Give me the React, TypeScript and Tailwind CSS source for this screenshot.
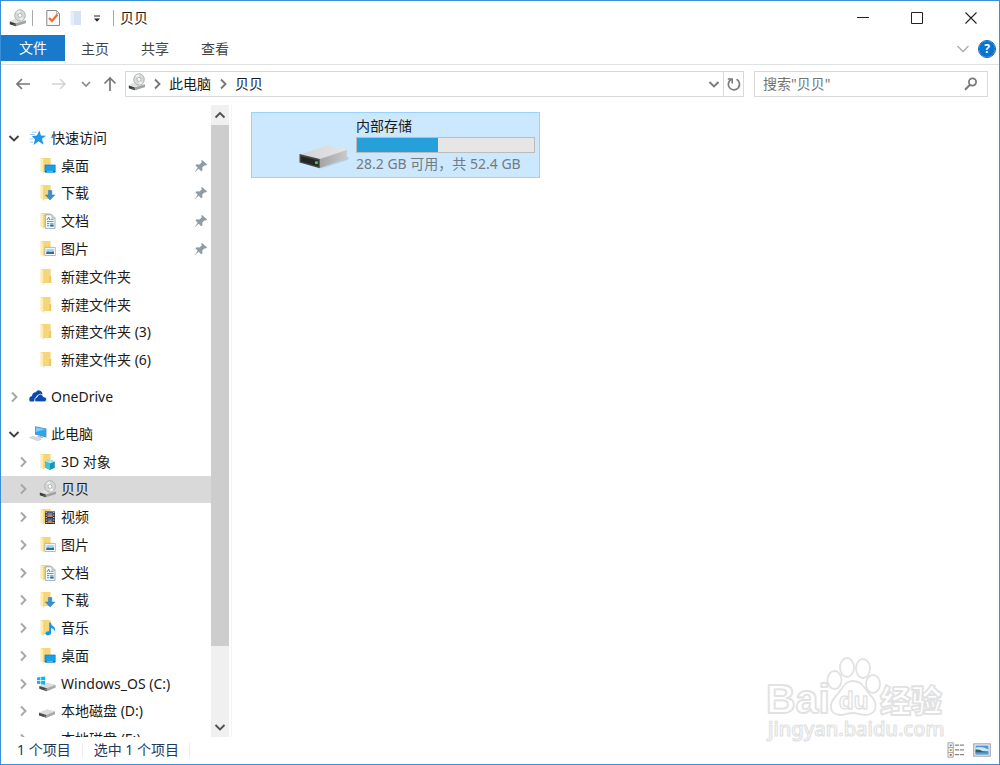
import React, { useState } from "react";

type IconProps = { className?: string };

const Chevron = ({ dir, className = "" }: { dir: "right" | "down" | "up"; className?: string }) => {
  const d = {
    right: "M4 1.5 8.5 6 4 10.5",
    down: "M1.5 4 6 8.5 10.5 4",
    up: "M1.5 8.5 6 4 10.5 8.5",
  }[dir];
  return (
    <svg viewBox="0 0 12 12" className={`size-3 ${className}`} fill="none" stroke="currentColor" strokeWidth="1.9" aria-hidden="true">
      <path d={d} />
    </svg>
  );
};

const DiscDrive = ({ className = "" }: IconProps) => (
  <svg viewBox="0 0 18 18" className={`size-[18px] ${className}`} aria-hidden="true">
    <path d="M1 12.6 6 9.8 17 11.6V14L6.5 17.2 1 15.4z" fill="#c9c9c9" />
    <path d="M1 12.6 6 9.8 17 11.6 6.8 14.6z" fill="#e2e2e2" />
    <path d="M.8 12.4 6.8 14.4V17.2L.8 15.2z" fill="#3a3d3a" />
    <path d="M6.8 14.5 17 11.6V14L6.8 17.2z" fill="#a2a2a2" />
    <ellipse cx="11" cy="6.4" rx="5.3" ry="5.7" fill="#d6d9d9" stroke="#aaafaf" strokeWidth=".9" />
    <path d="M11 6.4 7.5 2.8A5 5 0 0 1 11 1.2zM11 6.4 14.6 10A5 5 0 0 1 11 11.6z" fill="#eef0f0" />
    <ellipse cx="11" cy="6.4" rx="1.9" ry="2" fill="#fff" stroke="#a5abab" strokeWidth=".8" />
    <circle cx="5" cy="15.3" r=".5" fill="#5fc95f" />
  </svg>
);

const DiskShape = () => (
  <>
    <path d="M1 9.8 9 6.6 17 8.6V11.2L8.3 14.6 1 12.4z" fill="#c4c4c4" />
    <path d="M1 9.8 9 6.6 17 8.6 8.3 11.9z" fill="#dedede" />
    <path d="M.8 9.6 8.3 11.9V14.8L.8 12.4z" fill="#4a4c4a" />
    <path d="M8.3 11.9 17 8.6V11.2L8.3 14.8z" fill="#aaa" />
    <circle cx="6.9" cy="13.1" r=".6" fill="#5fd35f" />
  </>
);

const Disk = () => (
  <svg viewBox="0 0 18 18" className="size-[18px]" aria-hidden="true">
    <g transform="translate(-1 1)">
      <DiskShape />
    </g>
  </svg>
);

const WindowsDisk = () => (
  <svg viewBox="0 0 18 18" className="size-[18px] overflow-visible" aria-hidden="true">
    <g transform="translate(-.5 1.4)">
      <DiskShape />
    </g>
    <path d="M-2 2.500 1.400 2.100V5.300H-2zM2.100 2 6.200 1.500V5.300H2.100zM-2 6H1.400V9.100L-2 8.700zM2.100 6H6.200V9.700L2.100 9.200z" fill="#10b4ee" />
  </svg>
);

const Folder = ({ children }: { children?: React.ReactNode }) => (
  <svg viewBox="0 0 18 18" className="size-[18px]" aria-hidden="true">
    <path d="M2.2 1H11.6V15H2.2z" fill="#f6d67b" />
    <path d="M10.2 8H12.2V15H10.2z" fill="#eec75f" />
    <path d="M1.4 1.1 4.8 2.4V16.6L1.4 14.6z" fill="#fdebb0" />
    <path d="M4.8 2.6V16.5" stroke="#efcd70" strokeWidth=".7" />
    {children}
  </svg>
);

const DesktopFolder = () => (
  <Folder>
    <path d="M6 8H16.2V15.2H6z" fill="#13a1f2" stroke="#1678b8" strokeWidth=".7" />
    <path d="M6.2 14H16V15.2H6.2z" fill="#1669a6" />
    <path d="M8 14.2H14V15H8z" fill="#65c7f8" />
  </Folder>
);
const DownloadFolder = () => (
  <Folder>
    <path d="M9.4 6.5H12.8V11H15.8L11.1 16 6.5 11H9.4z" fill="#3791d8" stroke="#2377bd" strokeWidth=".5" />
  </Folder>
);
const DocumentFolder = () => (
  <Folder>
    <path d="M6.3 2.8H13L16 5.8V16.4H6.3z" fill="#fbfdfe" stroke="#8d9aa5" strokeWidth=".8" />
    <path d="M13 2.8V5.8H16" fill="#dce3e8" stroke="#8d9aa5" strokeWidth=".7" />
    <path d="M8 8 9.7 5 10.6 8M11.5 7.3H14.6M8 9.6H14.6M8 11.6H10.3M8 13.8H10.3" stroke="#299bd8" strokeWidth="1" fill="none" />
    <path d="M11.2 11H14.6V14.3H11.2z" fill="#6bb8e6" />
    <path d="M11.2 13H14.6V14.5H11.2z" fill="#356b68" />
  </Folder>
);
const PictureFolder = () => (
  <Folder>
    <path d="M5.9 7.4H16.3V15.5H5.9z" fill="#fff" stroke="#9daab3" strokeWidth=".8" />
    <path d="M7.3 8.8H14.9V14.1H7.3z" fill="#a7d4f2" />
    <path d="M7.3 12.1Q9 10.8 11 12L14.9 11.5V14.1H7.3z" fill="#326e9a" />
  </Folder>
);
const ObjectsFolder = () => (
  <Folder>
    <path d="M6 8.600 11 6.800 15.800 8.400V14.700L11 17 6 14.600z" fill="#1795b5" />
    <path d="M6 8.600 11 6.800 15.800 8.400 11 10.400z" fill="#a3ecf4" />
    <path d="M6 8.600 11 10.400V17L6 14.600z" fill="#3fc6dc" />
  </Folder>
);
const VideoFolder = () => (
  <Folder>
    <path d="M6 3.4H16V16H6z" fill="#2e3038" />
    <path d="M8.4 4.4H13.6V9H8.4z" fill="#647ebd" />
    <path d="M8.4 10.2H13.6V15H8.4z" fill="#4d68a8" />
    <path d="M8.4 8 11 6 13.6 8V9H8.4zM8.4 14 11 12 13.6 14V15H8.4z" fill="#c98b4b" />
    <path d="M7.2 4V16M14.8 4V16" stroke="#f2f2f2" strokeWidth="1" strokeDasharray="1.2 1.3" />
  </Folder>
);
const MusicFolder = () => (
  <Folder>
    <path d="M10.2 3.5H11.8Q12 6 14.4 7.4 17 9.2 15.7 12.4 15.3 9.8 12 9V13.4Q12 16 9.2 16.3 6.3 16.3 6.4 14.2 6.8 12 10.2 12.2z" fill="#0e97ee" />
  </Folder>
);

const Star = () => (
  <svg viewBox="0 0 18 18" className="size-[18px]" aria-hidden="true">
    <path d="M10.5 1.4 11.9 6.4 17 6.7 12.9 9.8 14.6 15.7 9.6 12.2 4.5 15.9 6.1 10.3 2.8 7.3 7.9 6.6z" fill="#1f95e6" />
    <path d="M2.5 3.2H7.5M1 5.5H6M.5 10H4M1 13H4" stroke="#8dcaf3" strokeWidth=".9" />
  </svg>
);
const OneDrive = () => (
  <svg viewBox="0 0 18 18" className="size-[18px]" aria-hidden="true">
    <path d="M.4 12.4Q-.2 8.6 3 8 3.3 4.600 6.800 4.300 8.400 1.300 11.400 2.800 13.600 4.100 13.500 6.400L8 7.500 5 13.600H2Q.8 13.600.4 12.400z" fill="#0c49ad" />
    <path d="M5.600 12.200Q5.300 9.600 8 9.200 8.800 6.200 11.400 6.200 13.600 6.400 14.400 8.800 17.400 8.800 17.600 11.200 17.600 13.700 15.400 13.800H7.400Q6 13.600 5.600 12.200z" fill="#0c49ad" stroke="#fff" strokeWidth=".7" />
  </svg>
);
const Computer = () => (
  <svg viewBox="0 0 18 18" className="size-[18px]" aria-hidden="true">
    <path d="M6 1.3 17.4 3.5V12.4L6 9.6z" fill="#5c8bb0" />
    <path d="M6.7 2.3 16.6 4.2V11.3L6.7 8.9z" fill="#27a7ef" />
    <path d="M6.7 2.3 16.6 4.2 6.7 7z" fill="#7dcbf7" />
    <path d="M9.5 10.4 14 11.6V13.2L8 12z" fill="#aebac4" />
    <path d="M.6 12.6 4.2 11.4 12.4 14 9 15.8z" fill="#d5dce2" stroke="#adb8c1" strokeWidth=".5" />
  </svg>
);
const Pin = () => (
  <svg viewBox="0 0 14 14" className="size-3.5" aria-hidden="true">
    <path d="M8 1 13.2 5.6 11.8 6.6 10.8 6.2 8.2 8.6 8.5 11.2 7.1 12.2 4.7 9.7 1 13 .8 12.8 3.7 8.7 1.5 6.4 2.7 5.3 5.5 5.6 7.8 3.2 7.2 1.8z" fill="#8f9ba5" />
  </svg>
);

const LargeDrive = () => (
  <svg viewBox="0 0 50 26" className="h-[26px] w-[50px] overflow-visible" aria-hidden="true">
    <defs>
      <linearGradient id="driveTop" x1="0" x2="1">
        <stop offset="0" stopColor="#d3d4d6" />
        <stop offset="1" stopColor="#e5e5e7" />
      </linearGradient>
      <linearGradient id="driveSide" x1="0" x2="1">
        <stop offset="0" stopColor="#a3a4a5" />
        <stop offset="1" stopColor="#c9c9ca" />
      </linearGradient>
    </defs>
    <path d="M21 25 48 16 50 14 47 12z" fill="#93b1c9" opacity=".5" />
    <path d="M1 10.5 27 1.6Q29 1 31 1.5L46.5 5.2 47.8 6.2 21 15.2z" fill="url(#driveTop)" />
    <path d="M20.8 15 47.8 6V13.8L20.8 24.3z" fill="url(#driveSide)" />
    <path d="M.5 10 20.8 15.1V24.3L.5 18.4z" fill="#454747" />
    <path d="M2 12.2 19.4 16.6V22.4L2 17.4z" fill="#242626" />
    <circle cx="17.4" cy="18.7" r="1.6" fill="#37cf42" />
  </svg>
);

type Node = { label: string; icon: React.ReactNode; pinned?: boolean; leaf?: boolean };

const quick: Node[] = [
  { label: "桌面", icon: <DesktopFolder />, pinned: true, leaf: true },
  { label: "下载", icon: <DownloadFolder />, pinned: true, leaf: true },
  { label: "文档", icon: <DocumentFolder />, pinned: true, leaf: true },
  { label: "图片", icon: <PictureFolder />, pinned: true, leaf: true },
  { label: "新建文件夹", icon: <Folder />, leaf: true },
  { label: "新建文件夹", icon: <Folder />, leaf: true },
  { label: "新建文件夹 (3)", icon: <Folder />, leaf: true },
  { label: "新建文件夹 (6)", icon: <Folder />, leaf: true },
];

const computer: Node[] = [
  { label: "3D 对象", icon: <ObjectsFolder /> },
  { label: "贝贝", icon: <DiscDrive /> },
  { label: "视频", icon: <VideoFolder /> },
  { label: "图片", icon: <PictureFolder /> },
  { label: "文档", icon: <DocumentFolder /> },
  { label: "下载", icon: <DownloadFolder /> },
  { label: "音乐", icon: <MusicFolder /> },
  { label: "桌面", icon: <DesktopFolder /> },
  { label: "Windows_OS (C:)", icon: <WindowsDisk /> },
  { label: "本地磁盘 (D:)", icon: <Disk /> },
  { label: "本地磁盘 (E:)", icon: <Disk /> },
];

const RootRow = ({ label, icon, open }: { label: string; icon: React.ReactNode; open: boolean }) => (
  <div className="flex min-h-0 items-center pl-[7px]">
    <button type="button" aria-label={`展开 ${label}`} className={open ? "text-[#404040]" : "text-[#a6a6a6]"}>
      <Chevron dir={open ? "down" : "right"} />
    </button>
    <button type="button" className="ml-[9px] flex items-center gap-1 whitespace-nowrap">
      {icon}
      {label}
    </button>
  </div>
);

const ChildRow = ({ node, selected, onSelect }: { node: Node; selected: boolean; onSelect: () => void }) => (
  <li className={`flex min-h-0 items-center pr-[3px] pl-4 ${selected ? "bg-[#d9d9d9]" : ""}`}>
    {node.leaf ? (
      <span className="w-3" />
    ) : (
      <button type="button" aria-label={`展开 ${node.label}`} className="text-[#a6a6a6]">
        <Chevron dir="right" />
      </button>
    )}
    <button type="button" onClick={onSelect} className="ml-2.5 flex flex-1 items-center gap-1 whitespace-nowrap">
      {node.icon}
      {node.label}
    </button>
    {node.pinned && <Pin />}
  </li>
);

const Watermark = () => (
  <svg viewBox="0 0 184 92" className="pointer-events-none absolute right-[52px] bottom-[20px] h-[92px] w-[184px]" fill="#fff" stroke="#e2e2e2" strokeWidth="1.8" strokeLinejoin="round" aria-hidden="true">
    <g fontWeight="700" fontFamily="'Liberation Sans', sans-serif">
      <text x="2" y="60" fontSize="41">Bai</text>
      <ellipse cx="70.500" cy="27" rx="7" ry="9" />
      <ellipse cx="83" cy="14.500" rx="7" ry="9.500" />
      <ellipse cx="99" cy="15.500" rx="7" ry="9.500" />
      <ellipse cx="109" cy="31" rx="7" ry="9" />
      <path d="M89 28C98 28 101 36 106 42 114 49 114 61 102 62 96 62 94 60 89 60 83 60 81 62 76 62 64 61 65 50 72 43 78 37 80 28 89 28z" />
      <text x="75" y="56" fontSize="24" strokeWidth="1.400">du</text>
      <text x="116" y="59" fontSize="31" fontFamily="'Noto Sans CJK SC', sans-serif" fontWeight="900">经验</text>
    </g>
    <text x="4" y="83" fontSize="20" fontFamily="'Noto Sans', sans-serif" fontWeight="500" strokeWidth="1.200">jingyan.baidu.com</text>
  </svg>
);

export default function App() {
  const [selected, setSelected] = useState("贝贝");
  const [query, setQuery] = useState("");
  const used = 46;

  return (
    <div className="flex h-screen flex-col overflow-hidden border border-[#3990d9] bg-white font-['Noto_Sans','Noto_Sans_CJK_SC',sans-serif] text-sm leading-5 text-[#1a1a1a]">
      <header>
        <div className="flex h-[34px] items-center pl-2">
          <DiscDrive />
          <span className="ml-[5px] h-4 w-px bg-[#a8a8a8]" />
          <button type="button" aria-label="属性" className="ml-3">
            <svg viewBox="0 0 16 18" className="h-[18px] w-4" aria-hidden="true">
              <path d="M1.800 1.500H11.500L14.500 4.500V16.500H1.800z" fill="#fafafa" stroke="#8b8b8b" />
              <path d="M11.500 1.500V4.500H14.500" fill="none" stroke="#a5a5a5" strokeWidth=".8" />
              <path d="M4 9 7 12 12.500 5.500" fill="none" stroke="#f26a2e" strokeWidth="2.200" />
            </svg>
          </button>
          <button type="button" aria-label="新建文件夹" className="ml-2">
            <svg viewBox="0 0 14 18" className="h-[18px] w-3.5" aria-hidden="true">
              <path d="M2 2H12V16H2z" fill="#d6e2f3" />
              <path d="M1.500 2 5 3.200V17L1.500 15.500z" fill="#e6eef9" />
            </svg>
          </button>
          <button type="button" aria-label="自定义快速访问工具栏" className="ml-[9px]">
            <svg viewBox="0 0 10 10" className="size-2.5" aria-hidden="true">
              <path d="M2 3H8" stroke="#333" strokeWidth="1.100" />
              <path d="M2 5.500H8L5 8.700z" fill="#222" />
            </svg>
          </button>
          <span className="ml-[11px] h-4 w-px bg-[#a8a8a8]" />
          <h1 className="ml-1.5 flex-1">贝贝</h1>
          <button type="button" aria-label="最小化" className="flex w-[54px] justify-center">
            <svg viewBox="0 0 12 12" className="size-3" stroke="#222"><path d="M0 5.500H12" /></svg>
          </button>
          <button type="button" aria-label="最大化" className="flex w-[54px] justify-center">
            <svg viewBox="0 0 12 12" className="size-3" stroke="#222" fill="none"><path d="M.5.5H11.500V11.500H.5z" /></svg>
          </button>
          <button type="button" aria-label="关闭" className="mr-px flex w-[54px] justify-center">
            <svg viewBox="0 0 12 12" className="size-3" stroke="#222" strokeWidth="1.100"><path d="M.5.5 11.500 11.500M11.500.5.5 11.500" /></svg>
          </button>
        </div>
        <nav className="flex h-[30px] items-start border-b border-[#dfe1e3] text-[#444]">
          <button type="button" className="h-[26px] w-16 bg-[#1979ca] text-white">文件</button>
          <button type="button" className="h-7 w-[60px]">主页</button>
          <button type="button" className="h-7 w-[60px]">共享</button>
          <button type="button" className="h-7 w-[60px]">查看</button>
          <button type="button" aria-label="展开功能区" className="mt-2 ml-auto text-[#aaa]">
            <svg viewBox="0 0 12 12" className="size-3" fill="none" stroke="currentColor" strokeWidth="1.300"><path d="M.5 3 6 8.500 11.500 3" /></svg>
          </button>
          <button type="button" aria-label="帮助" className="mt-1.5 mr-1 ml-2.5 size-4 rounded-full bg-[#0873d2] text-xs leading-4 font-bold text-white outline outline-[#0b62ad]">?</button>
        </nav>
      </header>

      <div className="flex h-10 items-center pr-[11px] pb-0.5 pl-3.5 text-[#6b6b6b]">
        <button type="button" aria-label="后退">
          <svg viewBox="0 0 16 16" className="size-4" fill="none" stroke="#777" strokeWidth="1.700"><path d="M15 8H2M7 3 2 8 7 13" /></svg>
        </button>
        <button type="button" aria-label="前进" className="ml-5">
          <svg viewBox="0 0 16 16" className="size-4" fill="none" stroke="#d4d4d4" strokeWidth="1.500"><path d="M1 8H14M9 3 14 8 9 13" /></svg>
        </button>
        <button type="button" aria-label="最近浏览的位置" className="ml-3.5">
          <svg viewBox="0 0 10 10" className="size-2.5" fill="none" stroke="#8a8a8a" strokeWidth="1.700"><path d="M1 3 5 7 9 3" /></svg>
        </button>
        <button type="button" aria-label="向上" className="ml-[11px]">
          <svg viewBox="0 0 16 16" className="size-4" fill="none" stroke="#777" strokeWidth="1.700"><path d="M8 15V2M2.500 7.500 8 2 13.500 7.500" /></svg>
        </button>
        <div className="ml-[7px] flex h-[26px] flex-1 items-center border border-[#d9d9d9] pl-0.5 text-[#1a1a1a]">
          <DiscDrive className="-mt-1" />
          <Chevron dir="right" className="ml-[5px] text-[#777]" />
          <a href="#pc" className="ml-1.5">此电脑</a>
          <Chevron dir="right" className="mx-1.5 text-[#777]" />
          <a href="#device">贝贝</a>
          <button type="button" aria-label="以前的位置" className="mr-[3px] ml-auto text-[#7a7a7a]">
            <Chevron dir="down" />
          </button>
          <button type="button" aria-label="刷新" className="flex h-full w-5 items-center justify-center border-l border-[#d9d9d9]">
            <svg viewBox="0 0 14 16" className="h-4 w-3.5" fill="none" stroke="#7a7a7a" strokeWidth="1.700">
              <path d="M9.500 3.300A5.600 5.600 0 1 1 4 3.500" />
              <path d="M.8 3H5.200V7.400" strokeWidth="1.600" />
            </svg>
          </button>
        </div>
        <label className="ml-2.5 flex h-[26px] w-[234px] items-center border border-[#d9d9d9] pr-[9px] pl-2">
          <input
            aria-label="搜索贝贝"
            placeholder={'搜索"贝贝"'}
            value={query}
            onChange={(e) => setQuery(e.target.value)}
            className="min-w-0 flex-1 outline-none placeholder:text-[#737373]"
          />
          <svg viewBox="0 0 14 14" className="size-3.5" fill="none" stroke="#777" strokeWidth="1.700" aria-hidden="true">
            <circle cx="8.500" cy="5" r="3.600" />
            <path d="M6 7.800 1 12.800" strokeWidth="2" />
          </svg>
        </label>
      </div>

      <div className="flex min-h-0 flex-1">
        <aside className="flex w-[231px] border-r border-[#f5f5f5] pr-0.5">
          <nav aria-label="导航窗格" className="min-w-0 flex-1 overflow-hidden pt-[19px]">
            <ul className="grid h-[250px] auto-rows-fr">
              <RootRow label="快速访问" icon={<Star />} open />
              {quick.map((n, i) => (
                <ChildRow key={i} node={n} selected={false} onSelect={() => setSelected("")} />
              ))}
            </ul>
            <div className="my-[9px] grid h-7">
              <RootRow label="OneDrive" icon={<OneDrive />} open={false} />
            </div>
            <ul className="grid h-[333px] auto-rows-fr">
              <RootRow label="此电脑" icon={<Computer />} open />
              {computer.map((n) => (
                <ChildRow key={n.label} node={n} selected={selected === n.label} onSelect={() => setSelected(n.label)} />
              ))}
            </ul>
          </nav>
          <div className="flex w-[18px] flex-col bg-[#f0f0f0] text-[#505050]">
            <button type="button" aria-label="向上滚动" className="flex h-5 items-center justify-center"><Chevron dir="up" /></button>
            <div className="flex flex-1 flex-col">
              <div className="basis-[88%] bg-[#cdcdcd]" />
            </div>
            <button type="button" aria-label="向下滚动" className="flex h-5 items-center justify-center"><Chevron dir="down" /></button>
          </div>
        </aside>

        <main className="min-w-0 flex-1 pt-[7px] pl-[19px]">
          <button type="button" className="flex h-[66px] w-[289px] border border-[#99d1ff] bg-[#cce8ff] pr-1 pl-[47px] text-left">
            <span className="mt-[31px] mr-[7px] shrink-0"><LargeDrive /></span>
            <span className="flex min-w-0 flex-1 flex-col pt-[3px]">
              <span>内部存储</span>
              <span className="mt-px flex h-4 border border-[#bcbcbc] bg-[#e6e6e6]">
                <span className="bg-[#26a0da]" style={{ width: `${used}%` }} />
              </span>
              <span className="mt-px whitespace-nowrap text-[#737b82]">28.2 GB 可用，共 52.4 GB</span>
            </span>
          </button>
        </main>
      </div>

      <footer className="flex h-[27px] items-center pr-2 pb-px pl-4 text-[#1e395b]">
        <span>1 个项目</span>
        <span className="mx-[11px] h-3.5 w-px bg-[#ececec]" />
        <span>选中 1 个项目</span>
        <span className="ml-2.5 h-3.5 w-px bg-[#ececec]" />
        <button type="button" aria-label="详细信息" className="ml-auto">
          <svg viewBox="0 0 18 16" className="h-4 w-[18px]" fill="none">
            <path d="M1 .8H6.200V15.200H1zM1 5.600H6.200M1 10.400H6.200" stroke="#a0a0a0" />
            <path d="M2.700 2.500H4.700V4.300H2.700z" fill="#4b8fb5" />
            <path d="M2.700 7.200H4.700V9H2.700z" fill="#a89735" />
            <path d="M2.700 12H4.700V13.800H2.700z" fill="#e0452c" />
            <path d="M7.800 3.200H17M7.800 7.900H17M7.800 12.600H17" stroke="#888" strokeWidth="1.200" strokeDasharray="4.200 .8" />
          </svg>
        </button>
        <button type="button" aria-label="大图标" className="ml-2">
          <svg viewBox="0 0 18 14" className="h-3.5 w-[18px]">
            <path d="M.8.800H17.200V13.200H.8z" fill="#fff" stroke="#a9a9a9" strokeWidth="1.300" />
            <path d="M2.500 2.500H15.500V11.500H2.500z" fill="#4a94e8" />
            <path d="M2.500 4.500Q9 3 15.500 6.500V8H2.500z" fill="#c9e8fa" />
            <path d="M2.500 6.500Q7 6 10 8.500L15.500 9.500H2.500z" fill="#2c6259" />
            <path d="M2.500 9.500H15.500V11.500H2.500z" fill="#5a9fc6" />
          </svg>
        </button>
      </footer>
      <Watermark />
    </div>
  );
}
